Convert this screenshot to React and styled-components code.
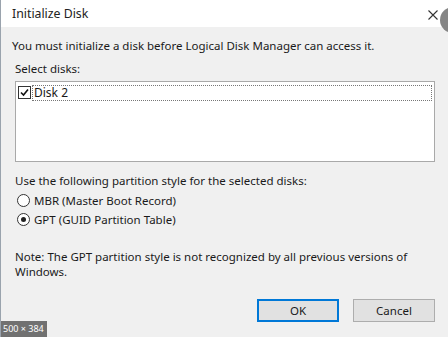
import React from "react";
import styled, { createGlobalStyle } from "styled-components";

const Global = createGlobalStyle`
  html, body { margin: 0; padding: 0; background: #f0f0f0; }
  body { width: 448px; height: 337px; overflow: hidden; font-family: "Noto Sans", "Liberation Sans", sans-serif; }
`;

const Window = styled.div`
  position: relative;
  width: 448px;
  height: 337px;
  background: #f0f0f0;
  border-left: 1px solid #9aa3ad;
  box-sizing: border-box;
  display: flex;
  flex-direction: column;
  color: #1a1a1a;
  font-size: 11.5px;
  overflow: hidden;
`;

const TitleBar = styled.div`
  height: 27px;
  background: #ffffff;
  display: flex;
  align-items: center;
  padding-left: 11px;
  position: relative;
  font-size: 12.3px;
  color: #222;
`;

const Close = styled.div`
  position: absolute;
  left: 427px;
  top: 7px;
  width: 10px;
  height: 10px;
`;

const Circle = styled.div`
  position: absolute;
  left: 439px;
  top: 7px;
  width: 26px;
  height: 26px;
  border-radius: 50%;
  background: #858585;
  z-index: 2;
`;

const Body = styled.div`
  display: flex;
  flex-direction: column;
  padding: 11px 13px 0 11px;
`;

const Text = styled.div`
  line-height: 15px;
  margin-left: ${(p) => p.$ml || 0}px;
  margin-top: ${(p) => p.$mt || 0}px;
`;

const ListBox = styled.div`
  margin: 5px 0 0 3px;
  height: 81px;
  background: #fff;
  border: 1px solid #a9a9a9;
  box-sizing: border-box;
  padding: 2px 2px 0 2px;
`;

const Row = styled.div`
  display: flex;
  align-items: center;
  height: 17px;
`;

const Check = styled.div`
  width: 11px;
  height: 11px;
  border: 1px solid #333;
  background: #fff;
  display: flex;
  align-items: center;
  justify-content: center;
  flex: none;
`;

const Focus = styled.div`
  flex: 1;
  height: 16px;
  margin-left: 1px;
  border: 1px dotted #777;
  box-sizing: border-box;
  display: flex;
  align-items: center;
  padding-left: 1px;
  font-size: 12px;
`;

const RadioRow = styled.div`
  display: flex;
  align-items: center;
  height: 19px;
  margin-left: 5px;
  margin-top: ${(p) => p.$mt || 0}px;
  gap: 4px;
`;

const Radio = styled.div`
  width: 11px;
  height: 11px;
  border-radius: 50%;
  border: 1px solid #333;
  background: #fff;
  display: flex;
  align-items: center;
  justify-content: center;
  &::after {
    content: "";
    display: ${(p) => (p.$on ? "block" : "none")};
    width: 5px;
    height: 5px;
    border-radius: 50%;
    background: #222;
  }
`;

const Buttons = styled.div`
  display: flex;
  justify-content: flex-end;
  gap: 14px;
  margin-top: 20px;
`;

const Button = styled.button`
  width: 82px;
  height: 23px;
  box-sizing: border-box;
  background: #e1e1e1;
  border: ${(p) => (p.$primary ? "2px solid #0078d7" : "1px solid #adadad")};
  font-family: inherit;
  font-size: 11.5px;
  color: #1a1a1a;
  padding: 0;
`;

const Badge = styled.div`
  position: absolute;
  left: -1px;
  bottom: 0;
  background: rgba(90, 90, 90, 0.85);
  color: #fff;
  font-size: 9px;
  padding: 2px 3px;
  line-height: 12px;
`;

export default function App() {
  return (
    <>
      <Global />
      <Window>
        <TitleBar>
          Initialize Disk
          <Close>
            <svg width="10" height="10" viewBox="0 0 10 10">
              <path d="M0.5 0.5 L9.5 9.5 M9.5 0.5 L0.5 9.5" stroke="#333" strokeWidth="1.1" />
            </svg>
          </Close>
        </TitleBar>
        <Circle />
        <Body>
          <Text>You must initialize a disk before Logical Disk Manager can access it.</Text>
          <Text $ml={3} $mt={8}>Select disks:</Text>
          <ListBox>
            <Row>
              <Check>
                <svg width="9" height="9" viewBox="0 0 9 9">
                  <path d="M1 4.5 L3.5 7 L8 1.5" stroke="#111" strokeWidth="1.6" fill="none" />
                </svg>
              </Check>
              <Focus>Disk 2</Focus>
            </Row>
          </ListBox>
          <Text $ml={3} $mt={11}>Use the following partition style for the selected disks:</Text>
          <RadioRow $mt={3}>
            <Radio />
            MBR (Master Boot Record)
          </RadioRow>
          <RadioRow>
            <Radio $on />
            GPT (GUID Partition Table)
          </RadioRow>
          <Text $ml={3} $mt={20}>Note: The GPT partition style is not recognized by all previous versions of</Text>
          <Text $ml={3}>Windows.</Text>
          <Buttons>
            <Button $primary>OK</Button>
            <Button>Cancel</Button>
          </Buttons>
        </Body>
        <Badge>500 × 384</Badge>
      </Window>
    </>
  );
}
